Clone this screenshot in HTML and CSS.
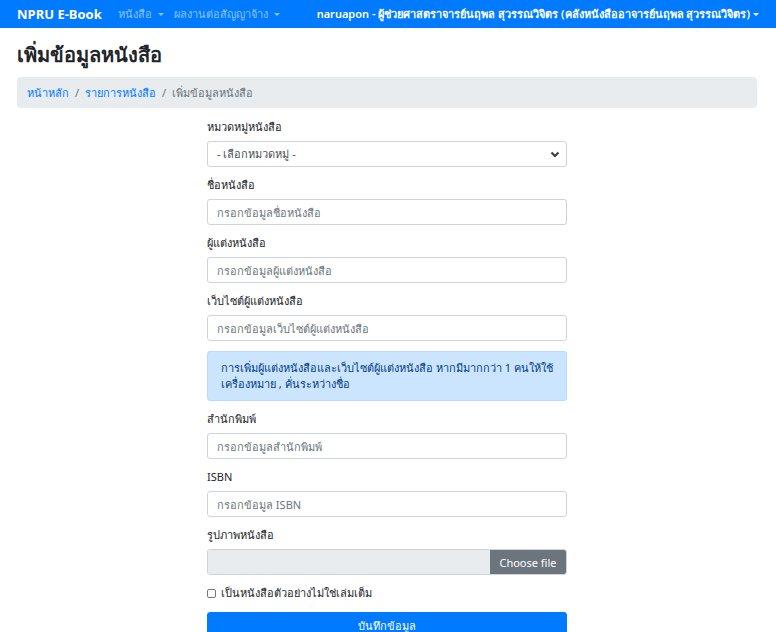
FILE: index.html
```html
<!DOCTYPE html>
<html lang="th">
<head>
<meta charset="utf-8">
<title>เพิ่มข้อมูลหนังสือ</title>
<link rel="stylesheet" href="styles.css">
</head>
<body>
<nav class="navbar">
  <a class="brand" href="#">NPRU E-Book</a>
  <ul class="nav-left">
    <li class="nav-link dropdown">หนังสือ</li>
    <li class="nav-link dropdown">ผลงานต่อสัญญาจ้าง</li>
  </ul>
  <div class="nav-user dropdown">naruapon - ผู้ช่วยศาสตราจารย์นฤพล สุวรรณวิจิตร (คลังหนังสืออาจารย์นฤพล สุวรรณวิจิตร)</div>
</nav>
<main class="container">
  <h1 class="title">เพิ่มข้อมูลหนังสือ</h1>
  <ol class="breadcrumb">
    <li><a href="#">หน้าหลัก</a></li>
    <li class="sep">/</li>
    <li><a href="#">รายการหนังสือ</a></li>
    <li class="sep">/</li>
    <li class="active">เพิ่มข้อมูลหนังสือ</li>
  </ol>
  <form class="book-form">
    <div class="group">
      <label class="label">หมวดหมู่หนังสือ</label>
      <div class="select">
        <span>- เลือกหมวดหมู่ -</span>
        <svg class="chev" width="10" height="8" viewBox="0 0 10 8"><path d="M1.5 2.5 L5 6 L8.5 2.5" fill="none" stroke="#343a40" stroke-width="2"/></svg>
      </div>
    </div>
    <div class="group">
      <label class="label">ชื่อหนังสือ</label>
      <input class="input" type="text" placeholder="กรอกข้อมูลชื่อหนังสือ">
    </div>
    <div class="group">
      <label class="label">ผู้แต่งหนังสือ</label>
      <input class="input" type="text" placeholder="กรอกข้อมูลผู้แต่งหนังสือ">
    </div>
    <div class="group">
      <label class="label">เว็บไซต์ผู้แต่งหนังสือ</label>
      <input class="input" type="text" placeholder="กรอกข้อมูลเว็บไซต์ผู้แต่งหนังสือ">
    </div>
    <div class="alert">การเพิ่มผู้แต่งหนังสือและเว็บไซต์ผู้แต่งหนังสือ หากมีมากกว่า 1 คนให้ใช้เครื่องหมาย , คั่นระหว่างชื่อ</div>
    <div class="group">
      <label class="label">สำนักพิมพ์</label>
      <input class="input" type="text" placeholder="กรอกข้อมูลสำนักพิมพ์">
    </div>
    <div class="group">
      <label class="label">ISBN</label>
      <input class="input" type="text" placeholder="กรอกข้อมูล ISBN">
    </div>
    <div class="group">
      <label class="label">รูปภาพหนังสือ</label>
      <div class="file">
        <span class="file-name"></span>
        <span class="file-btn">Choose file</span>
      </div>
    </div>
    <div class="check">
      <span class="box"></span>
      <span>เป็นหนังสือตัวอย่างไม่ใช่เล่มเต็ม</span>
    </div>
    <button class="submit" type="button">บันทึกข้อมูล</button>
  </form>
</main>
</body>
</html>
```
FILE: styles.css
```css
* { box-sizing: border-box; }
body {
  margin: 0;
  font-family: "Noto Sans", "Liberation Sans", sans-serif;
  font-size: 11px;
  color: #212529;
  background: #fff;
}
.navbar {
  height: 28px;
  background: #007bff;
  display: flex;
  align-items: center;
  padding: 0 17px;
}
.brand {
  color: #fff;
  font-weight: 700;
  font-size: 13px;
  text-decoration: none;
  margin-right: 16px;
}
.nav-left {
  display: flex;
  list-style: none;
  margin: 0;
  padding: 0;
  flex: 1;
  gap: 10px;
}
.nav-link {
  color: rgba(255,255,255,0.55);
  font-size: 11px;
}
.dropdown::after {
  content: "";
  display: inline-block;
  margin-left: 6px;
  vertical-align: 2px;
  border-top: 3.5px solid;
  border-left: 3px solid transparent;
  border-right: 3px solid transparent;
}
.nav-user {
  color: #fff;
  font-size: 11px;
  font-weight: 600;
  white-space: nowrap;
}
.nav-user::after { margin-left: 3px; }
.container {
  padding: 0 19px 0 17px;
}
.title {
  font-size: 20px;
  font-weight: 700;
  margin: 12px 0 7px;
  line-height: 30px;
}
.breadcrumb {
  display: flex;
  list-style: none;
  margin: 0 0 11px;
  padding: 0 10px;
  height: 31px;
  align-items: center;
  background: #e9ecef;
  border-radius: 4px;
  font-size: 11px;
  gap: 6px;
}
.breadcrumb a { color: #007bff; text-decoration: none; }
.sep, .active { color: #6c757d; }
.book-form {
  width: 360px;
  margin: 0 auto;
}
.group { margin-bottom: 10px; }
.label {
  display: block;
  line-height: 16px;
  margin-bottom: 6px;
  font-size: 11px;
}
.input, .select {
  display: block;
  width: 100%;
  height: 26px;
  border: 1px solid #ced4da;
  border-radius: 3px;
  padding: 0 9px;
  font-family: inherit;
  font-size: 11px;
  color: #495057;
  background: #fff;
}
.input::placeholder { color: #6c757d; }
.select {
  display: flex;
  align-items: center;
  justify-content: space-between;
  padding-right: 6px;
}
.alert {
  background: #cce5ff;
  border: 1px solid #b8daff;
  color: #004085;
  border-radius: 3px;
  padding: 8px 13px;
  line-height: 16px;
  margin-bottom: 10px;
}
.file {
  display: flex;
  height: 26px;
  border: 1px solid #ced4da;
  border-radius: 3px;
  overflow: hidden;
}
.file-name { flex: 1; background: #e9ecef; }
.file-btn {
  background: #6c757d;
  color: #fff;
  width: 76px;
  display: flex;
  align-items: center;
  justify-content: center;
  font-size: 11px;
}
.check {
  display: flex;
  align-items: center;
  gap: 5px;
  margin: 4px 0 11px;
  line-height: 16px;
}
.box {
  width: 9px;
  height: 9px;
  border: 1px solid #767676;
  border-radius: 2px;
}
.submit {
  display: block;
  width: 100%;
  height: 27px;
  background: #007bff;
  border: 1px solid #007bff;
  border-radius: 3px;
  color: #fff;
  font-family: inherit;
  font-size: 11px;
}
```
